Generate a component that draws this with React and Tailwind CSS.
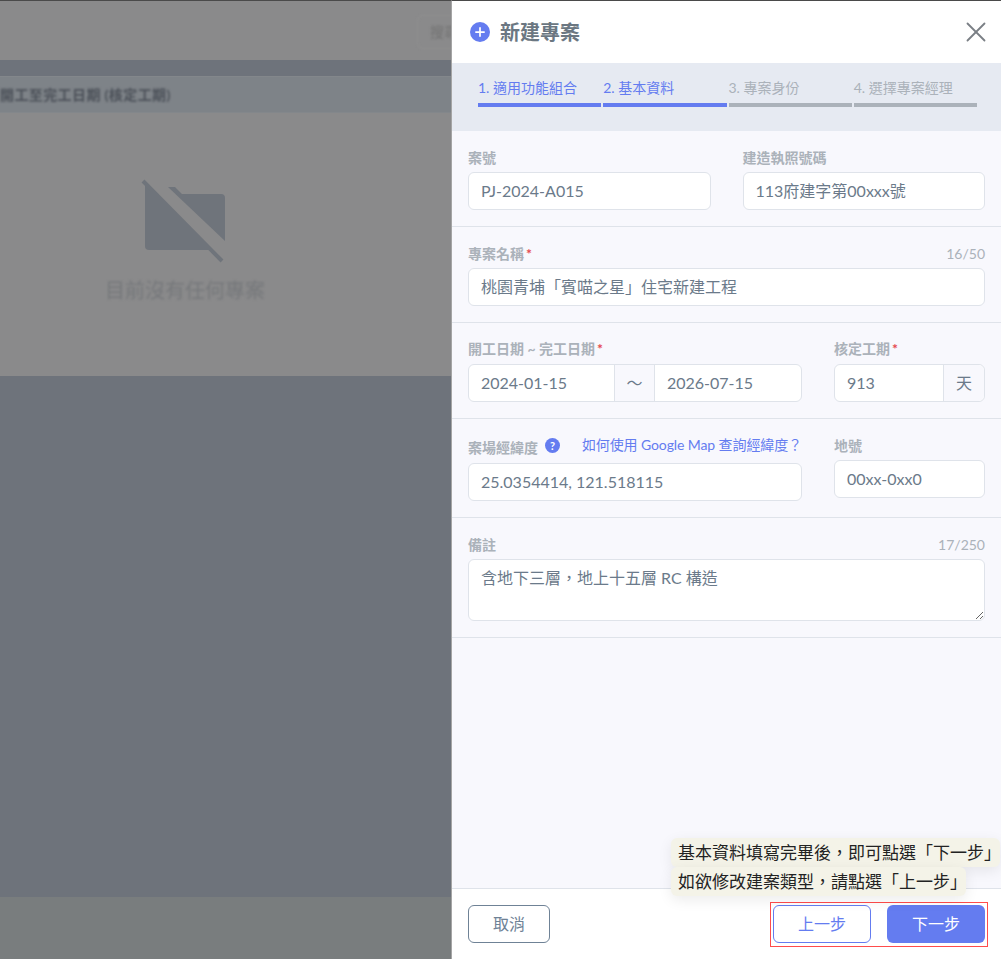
import { Plus, X } from 'lucide-react'

const inputBox = 'mt-1 h-[38px] w-full rounded-md border border-[#dfe3ea] bg-white px-3 flex items-center text-base text-[#6b7a8a]'
const labelText = 'block text-sm font-bold leading-5 text-[#abb2ba]'

function Label({ children, required }) {
  return (
    <span className={labelText}>
      {children}
      {required && <span className="ml-0.5 text-[#e5484d]">*</span>}
    </span>
  )
}

function Step({ text, active }) {
  return (
    <div className="flex-1 min-w-0">
      <div className={`h-5 text-sm leading-5 ${active ? 'text-[#647cf0]' : 'text-[#abb2ba]'}`}>{text}</div>
      <div className={`mt-[5px] h-1 ${active ? 'bg-[#647cf0]' : 'bg-[#abb2ba]'}`}></div>
    </div>
  )
}

function Backdrop() {
  return (
    <div className="relative flex w-[452px] shrink-0 flex-col overflow-hidden border-t border-r border-t-[#4a4a4a] border-r-[#a5a5a5] bg-[#6e737b]">
      {/* Blurred page behind the drawer */}
      <div className="relative h-[59px] bg-[#8a8a8b]">
        <div className="absolute left-[417px] top-[14px] flex h-[34px] w-[80px] items-center rounded-l-md border border-[#919191] pl-3 text-sm text-[#737373] blur-[1px]">搜尋</div>
      </div>
      <div className="h-[16px]"></div>
      <div className="flex h-[37px] items-center border-y border-[#83878b] bg-[#7e8388]">
        <span className="text-sm font-bold tracking-[0.4px] text-[#4b5058] blur-[1px]">開工至完工日期 (核定工期)</span>
      </div>
      <div className="h-[263px] bg-[#8a8a8b] pt-[66px]">
        <div className="flex w-[370px] flex-col items-center">
          <svg width="90" height="90" viewBox="0 0 90 90" className="blur-[0.5px]">
            <path d="M5 4V67a4 4 0 0 0 4 4H70Z" fill="#6f747b" />
            <path d="M28 8h7l7 7h39a4 4 0 0 1 4 4V62Z" fill="#6f747b" />
            <path d="M3 2L82 82" stroke="#6f747b" strokeWidth="4" />
          </svg>
          <div className="mt-[7px] text-xl leading-7 text-[#76787b] blur-[0.8px]">目前沒有任何專案</div>
        </div>
      </div>
      <div className="flex-1"></div>
      <div className="h-[62px] bg-[#797d7e]"></div>
    </div>
  )
}

export default function App() {
  return (
    <div className="flex h-[959px] w-[1001px] overflow-hidden font-['Lato','Noto_Sans_CJK_TC',sans-serif]">
      <Backdrop />
      <div className="flex min-w-0 flex-1 flex-col border-t border-[#4a4a4a] bg-[#f8f8fd]">
        {/* Header */}
        <header className="flex h-[62px] items-center justify-between bg-white pl-[18px] pr-2">
          <div className="flex items-center gap-2.5">
            <span className="flex h-5 w-5 items-center justify-center rounded-full bg-[#647cf0]">
              <Plus size={14} strokeWidth={3} className="text-white" />
            </span>
            <h1 className="text-xl font-bold text-[#6b7782]">新建專案</h1>
          </div>
          <X size={34} strokeWidth={1.3} className="text-[#7a7f85]" />
        </header>

        {/* Steps */}
        <div className="flex h-[68px] gap-0.5 bg-[#e6eaf2] pl-[26px] pr-6 pt-[15px]">
          <Step text="1. 適用功能組合" active />
          <Step text="2. 基本資料" active />
          <Step text="3. 專案身份" />
          <Step text="4. 選擇專案經理" />
        </div>

        {/* Form */}
        <main className="flex-1">
          <section className="flex h-[96px] gap-8 border-b border-[#dfe3ea] px-4 pt-[17px]">
            <div className="flex-1">
              <Label>案號</Label>
              <div className={inputBox}>PJ-2024-A015</div>
            </div>
            <div className="flex-1">
              <Label>建造執照號碼</Label>
              <div className={inputBox}>113府建字第00xxx號</div>
            </div>
          </section>

          <section className="h-[96px] border-b border-[#dfe3ea] px-4 pt-[17px]">
            <div className="flex items-center justify-between">
              <Label required>專案名稱</Label>
              <span className="text-sm leading-5 text-[#abb2ba]">16/50</span>
            </div>
            <div className={inputBox}>桃園青埔「賓喵之星」住宅新建工程</div>
          </section>

          <section className="flex h-[96px] gap-8 border-b border-[#dfe3ea] px-4 pt-[16px]">
            <div className="w-[334px]">
              <Label required>開工日期 ~ 完工日期</Label>
              <div className="mt-[5px] flex h-[38px] rounded-md border border-[#dfe3ea] bg-white text-base text-[#6b7a8a]">
                <div className="flex w-[145px] shrink-0 items-center px-3">2024-01-15</div>
                <div className="flex w-[41px] items-center justify-center border-x border-[#dfe3ea] bg-[#f8f8fd]">～</div>
                <div className="flex flex-1 items-center px-3">2026-07-15</div>
              </div>
            </div>
            <div className="flex-1">
              <Label required>核定工期</Label>
              <div className="mt-[5px] flex h-[38px] rounded-md border border-[#dfe3ea] bg-white text-base text-[#6b7a8a]">
                <div className="flex flex-1 items-center px-3">913</div>
                <div className="flex w-[41px] items-center justify-center rounded-r-md border-l border-[#dfe3ea] bg-[#f8f8fd]">天</div>
              </div>
            </div>
          </section>

          <section className="flex h-[99px] gap-8 border-b border-[#dfe3ea] px-4 pt-[17px]">
            <div className="w-[334px]">
              <div className="flex h-[23px] items-center justify-between">
                <span className="flex items-center gap-[7px]">
                  <Label>案場經緯度</Label>
                  <span className="-mt-[5px] flex h-[15px] w-[15px] items-center justify-center rounded-full bg-[#647cf0] text-[11px] font-bold leading-none text-white">?</span>
                </span>
                <span className="-mt-[5px] text-sm leading-5 tracking-[-0.1px] text-[#647cf0]">如何使用 Google Map 查詢經緯度？</span>
              </div>
              <div className={inputBox}>25.0354414, 121.518115</div>
            </div>
            <div className="flex-1">
              <Label>地號</Label>
              <div className={inputBox}>00xx-0xx0</div>
            </div>
          </section>

          <section className="h-[120px] border-b border-[#dfe3ea] px-4 pt-[17px]">
            <div className="flex items-center justify-between">
              <Label>備註</Label>
              <span className="text-sm leading-5 text-[#abb2ba]">17/250</span>
            </div>
            <textarea
              readOnly
              defaultValue="含地下三層，地上十五層 RC 構造"
              className="mt-1 block h-[62px] w-full rounded-md border border-[#dfe3ea] bg-white px-3 py-[7px] text-base leading-[22px] text-[#6b7a8a] outline-none"
            />
          </section>
        </main>

        {/* Footer */}
        <footer className="relative flex h-[71px] items-center justify-between border-t border-[#dfe3ea] bg-white px-4">
          <button className="h-[38px] w-[82px] rounded-md border border-[#6f8296] bg-white text-base text-[#6f8296]">取消</button>
          <div className="flex gap-4">
            <button className="h-[38px] w-[98px] rounded-md border border-[#647cf0] bg-white text-base text-[#647cf0]">上一步</button>
            <button className="h-[38px] w-[98px] rounded-md bg-[#647cf0] text-base text-white">下一步</button>
          </div>
          {/* Tutorial highlight */}
          <div className="absolute right-[13px] top-[13px] h-[45px] w-[218px] border border-[#f00]/70"></div>
          <div className="absolute left-[219px] top-[-51px] text-[17px] leading-[29px] text-[#222]">
            <div className="w-[329px] whitespace-nowrap rounded-md bg-[#f4f3e8] px-[7px] shadow-[0_4px_14px_rgba(0,0,0,0.08)]">基本資料填寫完畢後，即可點選「下一步」</div>
            <div className="w-[295px] whitespace-nowrap rounded-md bg-[#f4f3e8] px-[7px] shadow-[0_4px_14px_rgba(0,0,0,0.08)]">如欲修改建案類型，請點選「上一步」</div>
          </div>
        </footer>
      </div>
    </div>
  )
}
